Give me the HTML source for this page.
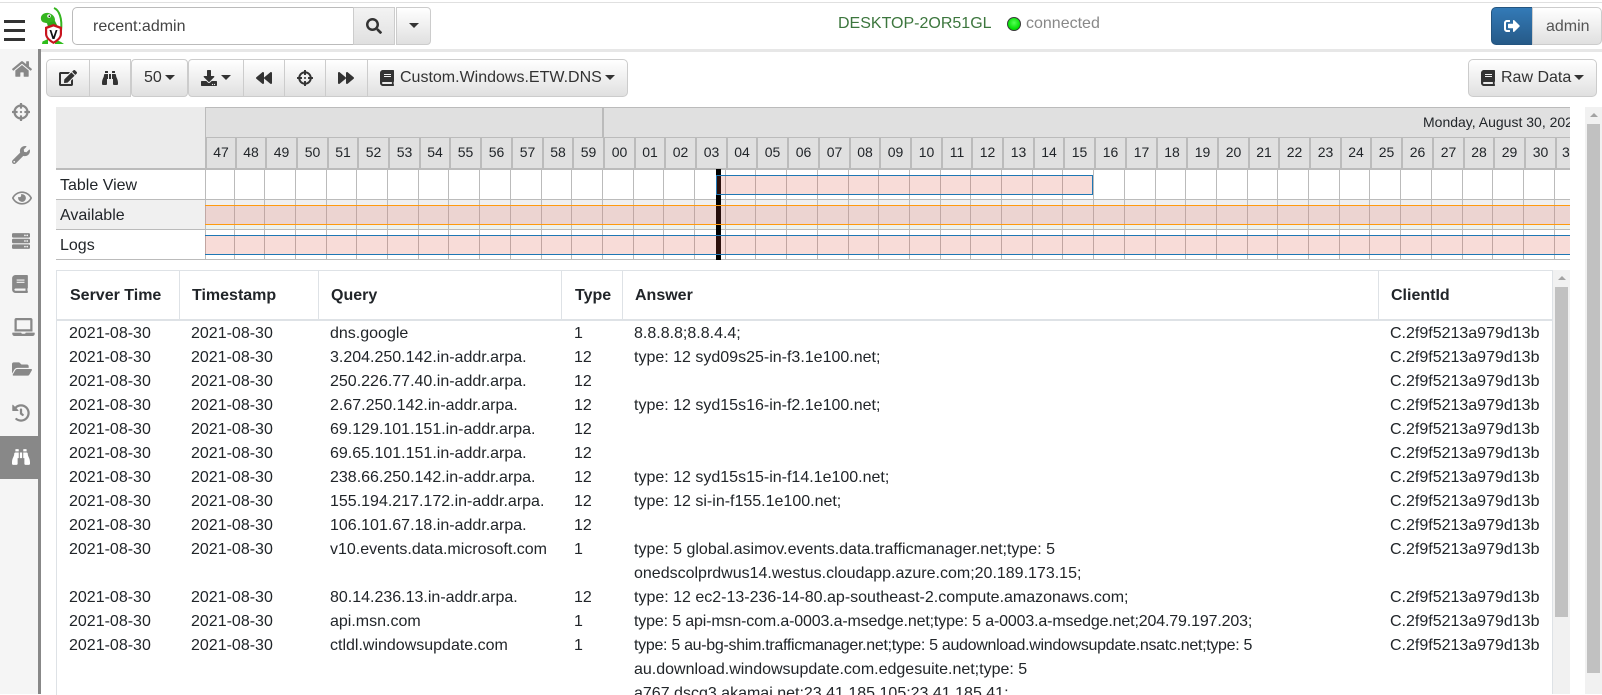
<!DOCTYPE html>
<html lang="en"><head><meta charset="utf-8"><title>Velociraptor</title>
<style>
html,body{margin:0;padding:0;width:1602px;height:694px;overflow:hidden;background:#fff;font-family:"Liberation Sans",sans-serif;font-size:16px;color:#212529}
.a{position:absolute}
.btn{position:absolute;box-sizing:border-box;background:linear-gradient(to bottom,#fff 0,#e0e0e0 100%);border:1px solid #ccc;color:#333;white-space:nowrap}
.ic{position:absolute;fill:currentColor}
.side{color:#888;fill:#888}
.caret{position:absolute;width:0;height:0;border-left:5px solid transparent;border-right:5px solid transparent;border-top:5px solid #333}
.t{position:absolute;top:138px;height:30px;line-height:29px;box-sizing:border-box;border-left:2px solid #bbb;background:#e0e0e0;font-size:14px;text-align:center;color:#212529;overflow:hidden}
.lbl{position:absolute;left:56px;width:149px;height:29px;line-height:29px;padding-left:4px;box-sizing:border-box}
.h{position:absolute;left:56px;width:1514px;height:1px;background:#bbb}
table{border-collapse:separate;border-spacing:0;table-layout:fixed;width:1495px;font-size:16px}
th{height:46px;padding:2px 0 0 12px;text-align:left;font-weight:bold;border-bottom:2px solid #dee2e6;border-right:1px solid #dee2e6;box-sizing:content-box;line-height:24px}
th:first-child{padding-left:13px}
th:nth-child(4){padding-left:13px}
th:last-child{border-right:0}
td{padding:0 0 0 11px;line-height:24px;vertical-align:top;white-space:nowrap;overflow:hidden;position:relative;top:1px}
td:first-child,td:nth-child(4){padding-left:12px}
.n1{letter-spacing:-.15px}
.n2{letter-spacing:-.3px}
</style></head><body>
<svg width="0" height="0" style="position:absolute"><defs>
<symbol id="home" viewBox="0 0 576 512"><path d="M280.37 148.26L96 300.11V464a16 16 0 0 0 16 16l112.06-.29a16 16 0 0 0 15.92-16V368a16 16 0 0 1 16-16h64a16 16 0 0 1 16 16v95.64a16 16 0 0 0 16 16.05L464 480a16 16 0 0 0 16-16V300L295.67 148.26a12.19 12.19 0 0 0-15.3 0zM571.6 251.47L488 182.56V44.05a12 12 0 0 0-12-12h-56a12 12 0 0 0-12 12v72.61L318.47 43a48 48 0 0 0-61 0L4.34 251.47a12 12 0 0 0-1.6 16.9l25.5 31A12 12 0 0 0 45.15 301l235.22-193.74a12.19 12.19 0 0 1 15.3 0L530.9 301a12 12 0 0 0 16.9-1.6l25.5-31a12 12 0 0 0-1.7-16.93z"/></symbol>
<symbol id="search" viewBox="0 0 512 512"><path d="M505 442.7L405.3 343c-4.5-4.5-10.6-7-17-7H372c27.6-35.3 44-79.7 44-128C416 93.1 322.9 0 208 0S0 93.1 0 208s93.1 208 208 208c48.3 0 92.7-16.4 128-44v16.3c0 6.4 2.5 12.5 7 17l99.7 99.7c9.4 9.4 24.6 9.4 33.9 0l28.3-28.3c9.4-9.4 9.4-24.6.1-34zM208 336c-70.7 0-128-57.2-128-128 0-70.7 57.2-128 128-128 70.7 0 128 57.2 128 128 0 70.7-57.2 128-128 128z"/></symbol>
<symbol id="bino" viewBox="0 0 512 512"><path d="M416 48c0-8.84-7.16-16-16-16h-64c-8.84 0-16 7.16-16 16v48h96V48zM63.91 159.99C61.4 253.84 3.46 274.22 0 404v44c0 17.67 14.33 32 32 32h96c17.67 0 32-14.33 32-32V288h32V128H95.84c-17.63 0-31.45 14.37-31.93 31.99zm384.18 0c-.48-17.62-14.3-31.99-31.93-31.99H320v160h32v160c0 17.67 14.33 32 32 32h96c17.67 0 32-14.33 32-32v-44c-3.46-129.78-61.4-150.16-63.91-244.01zM176 32h-64c-8.84 0-16 7.16-16 16v48h96V48c0-8.84-7.16-16-16-16zm48 256h64V128h-64v160z"/></symbol>
<symbol id="fwd" viewBox="0 0 512 512"><path d="M500.5 231.4l-192-160C287.9 54.3 256 68.6 256 96v320c0 27.4 31.9 41.8 52.5 24.6l192-160c15.3-12.8 15.3-36.4 0-49.2zm-256 0l-192-160C31.9 54.3 0 68.6 0 96v320c0 27.4 31.9 41.8 52.5 24.6l192-160c15.3-12.8 15.3-36.4 0-49.2z"/></symbol>
<symbol id="back" viewBox="0 0 512 512"><path d="M11.5 280.6l192 160c20.6 17.2 52.5 2.8 52.5-24.6V96c0-27.4-31.9-41.8-52.5-24.6l-192 160c-15.3 12.8-15.3 36.4 0 49.2zm256 0l192 160c20.6 17.2 52.5 2.8 52.5-24.6V96c0-27.4-31.9-41.8-52.5-24.6l-192 160c-15.3 12.8-15.3 36.4 0 49.2z"/></symbol>
<symbol id="cross" viewBox="0 0 512 512"><path d="M500 224h-30.364C455.724 130.325 381.675 56.276 288 42.364V12c0-6.627-5.373-12-12-12h-40c-6.627 0-12 5.373-12 12v30.364C130.325 56.276 56.276 130.325 42.364 224H12c-6.627 0-12 5.373-12 12v40c0 6.627 5.373 12 12 12h30.364C56.276 381.675 130.325 455.724 224 469.636V500c0 6.627 5.373 12 12 12h40c6.627 0 12-5.373 12-12v-30.364C381.675 455.724 455.724 381.675 469.636 288H500c6.627 0 12-5.373 12-12v-40c0-6.627-5.373-12-12-12zM288 404.634V364c0-6.627-5.373-12-12-12h-40c-6.627 0-12 5.373-12 12v40.634C165.826 392.232 119.783 346.243 107.366 288H148c6.627 0 12-5.373 12-12v-40c0-6.627-5.373-12-12-12h-40.634C119.768 165.826 165.757 119.783 224 107.366V148c0 6.627 5.373 12 12 12h40c6.627 0 12-5.373 12-12v-40.634C346.174 119.768 392.217 165.757 404.634 224H364c-6.627 0-12 5.373-12 12v40c0 6.627 5.373 12 12 12h40.634C392.232 346.174 346.243 392.217 288 404.634zM288 256c0 17.673-14.327 32-32 32s-32-14.327-32-32c0-17.673 14.327-32 32-32s32 14.327 32 32z"/></symbol>
<symbol id="eye" viewBox="0 0 576 512"><path d="M288 144a110.94 110.94 0 0 0-31.24 5 55.4 55.4 0 0 1 7.24 27 56 56 0 0 1-56 56 55.4 55.4 0 0 1-27-7.24A111.71 111.71 0 1 0 288 144zm284.52 97.4C518.29 135.59 410.93 64 288 64S57.68 135.64 3.48 241.41a32.35 32.35 0 0 0 0 29.19C57.71 376.41 165.07 448 288 448s230.32-71.64 284.52-177.41a32.35 32.35 0 0 0 0-29.19zM288 400c-98.65 0-189.09-55-237.93-144C98.91 167 189.34 112 288 112s189.09 55 237.93 144C477.1 345 386.66 400 288 400z"/></symbol>
<symbol id="laptop" viewBox="0 0 640 512"><path d="M624 416H381.54c-.74 19.81-14.71 32-32.74 32H288c-18.69 0-33.02-17.47-32.77-32H16c-8.8 0-16 7.2-16 16v16c0 35.2 28.8 64 64 64h512c35.2 0 64-28.8 64-64v-16c0-8.8-7.2-16-16-16zM576 48c0-26.4-21.6-48-48-48H112C85.6 0 64 21.6 64 48v336h512V48zm-64 272H128V64h384v256z"/></symbol>
<symbol id="folder" viewBox="0 0 576 512"><path d="M572.694 292.093L500.27 416.248A63.997 63.997 0 0 1 444.989 448H45.025c-18.523 0-30.064-20.093-20.731-36.093l72.424-124.155A64 64 0 0 1 152 256h399.964c18.523 0 30.064 20.093 20.73 36.093zM152 224h328v-48c0-26.51-21.49-48-48-48H272l-64-64H48C21.49 64 0 85.49 0 112v278.046l69.077-118.418C86.214 242.25 117.989 224 152 224z"/></symbol>
<symbol id="hist" viewBox="0 0 512 512"><path d="M504 255.531c.253 136.64-111.18 248.372-247.82 248.468-59.015.042-113.223-20.53-155.822-54.911-11.077-8.94-11.905-25.541-1.839-35.607l11.267-11.267c8.609-8.609 22.353-9.551 31.891-1.984C173.062 425.135 212.781 440 256 440c101.705 0 184-82.311 184-184 0-101.705-82.311-184-184-184-48.814 0-93.149 18.969-126.068 49.932l50.754 50.754c10.08 10.08 2.941 27.314-11.313 27.314H24c-8.837 0-16-7.163-16-16V38.627c0-14.254 17.234-21.393 27.314-11.314l49.372 49.372C129.209 34.136 189.552 8 256 8c136.81 0 247.747 110.78 248 247.531zm-180.912 78.784l9.823-12.63c8.138-10.463 6.253-25.542-4.21-33.679L288 256.349V152c0-13.255-10.745-24-24-24h-16c-13.255 0-24 10.745-24 24v135.651l65.409 50.874c10.463 8.137 25.541 6.253 33.679-4.21z"/></symbol>
<symbol id="server" viewBox="0 0 512 512"><path d="M480 160H32c-17.673 0-32-14.327-32-32V64c0-17.673 14.327-32 32-32h448c17.673 0 32 14.327 32 32v64c0 17.673-14.327 32-32 32zm-48-88c-13.255 0-24 10.745-24 24s10.745 24 24 24 24-10.745 24-24-10.745-24-24-24zm-64 0c-13.255 0-24 10.745-24 24s10.745 24 24 24 24-10.745 24-24-10.745-24-24-24zm112 248H32c-17.673 0-32-14.327-32-32v-64c0-17.673 14.327-32 32-32h448c17.673 0 32 14.327 32 32v64c0 17.673-14.327 32-32 32zm-48-88c-13.255 0-24 10.745-24 24s10.745 24 24 24 24-10.745 24-24-10.745-24-24-24zm-64 0c-13.255 0-24 10.745-24 24s10.745 24 24 24 24-10.745 24-24-10.745-24-24-24zm112 248H32c-17.673 0-32-14.327-32-32v-64c0-17.673 14.327-32 32-32h448c17.673 0 32 14.327 32 32v64c0 17.673-14.327 32-32 32zm-48-88c-13.255 0-24 10.745-24 24s10.745 24 24 24 24-10.745 24-24-10.745-24-24-24zm-64 0c-13.255 0-24 10.745-24 24s10.745 24 24 24 24-10.745 24-24-10.745-24-24-24z"/></symbol>
<symbol id="wrench" viewBox="0 0 512 512"><path d="M507.73 109.1c-2.24-9.03-13.54-12.09-20.12-5.51l-74.36 74.36-67.88-11.31-11.31-67.88 74.36-74.36c6.62-6.62 3.43-17.9-5.66-20.16-47.38-11.74-99.55.91-136.58 37.93-39.64 39.64-50.55 97.1-34.05 147.2L18.74 402.76c-24.99 24.99-24.99 65.51 0 90.5 24.99 24.99 65.51 24.99 90.5 0l213.21-213.21c50.12 16.71 107.47 5.68 147.37-34.22 37.07-37.07 49.7-89.32 37.91-136.73zM64 472c-13.25 0-24-10.75-24-24 0-13.26 10.75-24 24-24s24 10.74 24 24c0 13.25-10.75 24-24 24z"/></symbol>
<symbol id="book" viewBox="0 0 448 512"><path d="M448 360V24c0-13.3-10.7-24-24-24H96C43 0 0 43 0 96v320c0 53 43 96 96 96h328c13.3 0 24-10.7 24-24v-16c0-7.5-3.5-14.3-8.9-18.7-4.2-15.4-4.2-59.3 0-74.7 5.4-4.3 8.9-11.1 8.9-18.6zM128 134c0-3.3 2.7-6 6-6h212c3.3 0 6 2.7 6 6v20c0 3.3-2.7 6-6 6H134c-3.3 0-6-2.7-6-6v-20zm0 64c0-3.3 2.7-6 6-6h212c3.3 0 6 2.7 6 6v20c0 3.3-2.7 6-6 6H134c-3.3 0-6-2.7-6-6v-20zm253.4 250H96c-17.7 0-32-14.3-32-32 0-17.6 14.4-32 32-32h285.4c-1.9 17.1-1.9 46.9 0 64z"/></symbol>
<symbol id="edit" viewBox="0 0 576 512"><path d="M402.6 83.2l90.2 90.2c3.8 3.8 3.8 10 0 13.8L274.4 405.6l-92.8 10.3c-12.4 1.4-22.9-9.1-21.5-21.5l10.3-92.8L388.8 83.2c3.8-3.8 10-3.8 13.8 0zm162-22.9l-48.8-48.8c-15.2-15.2-39.9-15.2-55.2 0l-35.4 35.4c-3.8 3.8-3.8 10 0 13.8l90.2 90.2c3.8 3.8 10 3.8 13.8 0l35.4-35.4c15.2-15.3 15.2-40 0-55.2zM384 346.2V448H64V128h229.8c3.2 0 6.2-1.3 8.5-3.5l40-40c7.6-7.6 2.2-20.5-8.5-20.5H48C21.5 64 0 85.5 0 112v352c0 26.5 21.5 48 48 48h352c26.5 0 48-21.5 48-48V306.2c0-10.7-12.9-16-20.5-8.5l-40 40c-2.2 2.3-3.5 5.3-3.5 8.5z"/></symbol>
<symbol id="dl" viewBox="0 0 512 512"><path d="M216 0h80c13.3 0 24 10.7 24 24v168h87.7c17.8 0 26.7 21.5 14.1 34.1L269.7 378.3c-7.5 7.5-19.8 7.5-27.3 0L90.1 226.1c-12.6-12.6-3.7-34.1 14.1-34.1H192V24c0-13.3 10.7-24 24-24zm296 376v112c0 13.3-10.7 24-24 24H24c-13.3 0-24-10.7-24-24V376c0-13.3 10.7-24 24-24h146.7l49 49c20.1 20.1 52.5 20.1 72.6 0l49-49H488c13.3 0 24 10.7 24 24zm-124 88c0-11-9-20-20-20s-20 9-20 20 9 20 20 20 20-9 20-20zm64 0c0-11-9-20-20-20s-20 9-20 20 9 20 20 20 20-9 20-20z"/></symbol>
<symbol id="out" viewBox="0 0 512 512"><path d="M497 273L329 441c-15 15-41 4.5-41-17v-96H152c-13.3 0-24-10.7-24-24v-96c0-13.3 10.7-24 24-24h136V88c0-21.4 25.9-32 41-17l168 168c9.3 9.4 9.3 24.6 0 34zM192 436v-40c0-6.6-5.4-12-12-12H96c-17.7 0-32-14.3-32-32V160c0-17.7 14.3-32 32-32h84c6.6 0 12-5.4 12-12V76c0-6.6-5.4-12-12-12H96c-53 0-96 43-96 96v192c0 53 43 96 96 96h84c6.6 0 12-5.4 12-12z"/></symbol>
</defs></svg>

<!-- top bar -->
<div class="a" style="left:0;top:2px;width:1602px;height:1px;background:#e0e0e0"></div>
<div class="a" style="left:0;top:49px;width:1602px;height:3px;background:#e7e7e7"></div>
<div class="a" style="left:4px;top:20px;width:21px;height:3px;background:#333"></div>
<div class="a" style="left:4px;top:29px;width:21px;height:3px;background:#333"></div>
<div class="a" style="left:4px;top:38px;width:21px;height:3px;background:#333"></div>
<svg class="a" style="left:39px;top:7px" width="26" height="38" viewBox="0 0 26 38">
<path d="M15 1C20 3 23.500 11 22 24" fill="none" stroke="#35b51f" stroke-width="2"/>
<path d="M2 10C3 6 8 5 11 6.500C15 8 16 11 16 13C16 16 12 17 9 16.500L5 15.500C2.500 15 1.500 12.500 2 10z" fill="#35b51f"/>
<path d="M8 16L16 14L19 20H9z" fill="#2ea81b"/>
<circle cx="10" cy="9" r="1.800" fill="#fff"/><circle cx="10.300" cy="9.200" r=".8" fill="#111"/>
<path d="M3.500 34.500L9 32V37H3zM16 32L22 35 25 37H16z" fill="#2ebd1b"/>
<path d="M14.500 17L23 20V27C23 31 19 34.500 14.500 37 10 34.500 6 31 6 27V20z" fill="#c8141e"/>
<path d="M14.500 19.500L20.800 21.800V27C20.800 30 18 32.500 14.500 34.500 11 32.500 8.200 30 8.200 27V21.800z" fill="#fff"/>
<path d="M10.500 23H12.300L14.500 29.500 16.700 23H18.500L15.500 32H13.500z" fill="#111"/>
</svg>
<div class="a" style="left:72px;top:7px;width:282px;height:38px;box-sizing:border-box;border:1px solid #bbb;border-radius:5px 0 0 5px;line-height:38px;padding-left:20px;color:#444;background:#fff">recent:admin</div>
<div class="btn" style="left:353px;top:7px;width:42px;height:38px;background:linear-gradient(#f3f3f3,#e0e0e0)"><svg class="ic" style="left:12px;top:10px;color:#333" width="16" height="16"><use href="#search"/></svg></div>
<div class="btn" style="left:396px;top:7px;width:35px;height:38px;border-radius:0 4px 4px 0"><span class="caret" style="left:12px;top:15px"></span></div>
<div class="a" style="left:838px;top:14px;line-height:20px;color:#3c763d">DESKTOP-2OR51GL</div>
<div class="a" style="left:1007px;top:17px;width:14px;height:14px;border-radius:50%;border:1px solid #3a3a3a;box-sizing:border-box;background:radial-gradient(circle at 50% 40%,#5f5,#0d0 70%)"></div>
<div class="a" style="left:1026px;top:14px;line-height:20px;color:#888">connected</div>
<div class="btn" style="left:1491px;top:7px;width:42px;height:38px;border-radius:5px 0 0 5px;background:linear-gradient(#337ab7,#265a88);border-color:#245580"><svg class="ic" style="left:12px;top:10px;color:#fff" width="16" height="16"><use href="#out"/></svg></div>
<div class="btn" style="left:1532px;top:7px;width:70px;height:38px;border-radius:0 5px 5px 0;line-height:38px;padding-left:13px;color:#555">admin</div>

<!-- sidebar -->
<div class="a" style="left:0;top:49px;width:38px;height:645px;background:#f5f5f5"></div>
<div class="a" style="left:38px;top:49px;width:3px;height:645px;background:#888"></div>
<div class="a" style="left:0;top:436px;width:38px;height:43px;background:#888"></div>
<svg class="ic side" style="left:12px;top:60px" width="20" height="18"><use href="#home"/></svg>
<svg class="ic side" style="left:12px;top:103px" width="18" height="18"><use href="#cross"/></svg>
<svg class="ic side" style="left:12px;top:146px" width="18" height="18"><use href="#wrench"/></svg>
<svg class="ic side" style="left:12px;top:189px" width="20" height="18"><use href="#eye"/></svg>
<svg class="ic side" style="left:12px;top:232px" width="18" height="18"><use href="#server"/></svg>
<svg class="ic side" style="left:12px;top:275px" width="16" height="18"><use href="#book"/></svg>
<svg class="ic side" style="left:12px;top:318px" width="23" height="18"><use href="#laptop"/></svg>
<svg class="ic side" style="left:12px;top:360px" width="20" height="18"><use href="#folder"/></svg>
<svg class="ic side" style="left:12px;top:404px" width="18" height="18"><use href="#hist"/></svg>
<svg class="ic" style="left:12px;top:448px;color:#fff" width="18" height="18"><use href="#bino"/></svg>

<!-- toolbar -->
<div class="btn" style="left:46px;top:59px;width:44px;height:38px;border-radius:5px 0 0 5px"><svg class="ic" style="left:12px;top:10px" width="18" height="16"><use href="#edit"/></svg></div>
<div class="btn" style="left:89px;top:59px;width:42px;height:38px"><svg class="ic" style="left:12px;top:10px" width="16" height="16"><use href="#bino"/></svg></div>
<div class="btn" style="left:131px;top:59px;width:57px;height:38px;border-radius:4px;line-height:36px;padding-left:12px">50<span class="caret" style="left:33px;top:15px"></span></div>
<div class="btn" style="left:188px;top:59px;width:56px;height:38px;border-radius:4px 0 0 4px"><svg class="ic" style="left:12px;top:10px" width="16" height="16"><use href="#dl"/></svg><span class="caret" style="left:32px;top:15px"></span></div>
<div class="btn" style="left:243px;top:59px;width:42px;height:38px"><svg class="ic" style="left:12px;top:10px" width="16" height="16"><use href="#back"/></svg></div>
<div class="btn" style="left:284px;top:59px;width:42px;height:38px"><svg class="ic" style="left:12px;top:10px" width="16" height="16"><use href="#cross"/></svg></div>
<div class="btn" style="left:325px;top:59px;width:43px;height:38px"><svg class="ic" style="left:12px;top:10px" width="16" height="16"><use href="#fwd"/></svg></div>
<div class="btn" style="left:367px;top:59px;width:261px;height:38px;border-radius:0 5px 5px 0;line-height:36px;padding-left:32px"><svg class="ic" style="left:12px;top:10px" width="14" height="16"><use href="#book"/></svg>Custom.Windows.ETW.DNS<span class="caret" style="left:237px;top:15px"></span></div>
<div class="btn" style="left:1468px;top:59px;width:129px;height:38px;border-radius:5px;line-height:36px;padding-left:32px"><svg class="ic" style="left:12px;top:10px" width="14" height="16"><use href="#book"/></svg>Raw Data<span class="caret" style="left:105px;top:15px"></span></div>

<!-- timeline header -->
<div class="a" style="left:56px;top:107px;width:149px;height:62px;background:#ebebeb"></div>
<div class="a" style="left:205px;top:107px;width:1365px;height:31px;background:#e0e0e0;border-top:1px solid #bbb;box-sizing:border-box"></div>
<div class="a" style="left:205px;top:107px;width:1px;height:31px;background:#bbb"></div>
<div class="a" style="left:602px;top:107px;width:2px;height:31px;background:#bbb"></div>
<div class="a" style="left:1423px;top:112px;width:147px;height:20px;line-height:20px;font-size:14px;overflow:hidden;white-space:nowrap">Monday, August 30, 2021</div>
<div class="a" style="left:205px;top:137px;width:1365px;height:1px;background:#bbb"></div>
<div class="t" style="left:205px;width:30px">47</div><div class="t" style="left:235px;width:30px">48</div><div class="t" style="left:265px;width:31px">49</div><div class="t" style="left:296px;width:31px">50</div><div class="t" style="left:327px;width:30px">51</div><div class="t" style="left:357px;width:31px">52</div><div class="t" style="left:388px;width:31px">53</div><div class="t" style="left:419px;width:30px">54</div><div class="t" style="left:449px;width:31px">55</div><div class="t" style="left:480px;width:31px">56</div><div class="t" style="left:511px;width:31px">57</div><div class="t" style="left:542px;width:30px">58</div><div class="t" style="left:572px;width:31px">59</div><div class="t" style="left:603px;width:31px">00</div><div class="t" style="left:634px;width:30px">01</div><div class="t" style="left:664px;width:31px">02</div><div class="t" style="left:695px;width:31px">03</div><div class="t" style="left:726px;width:30px">04</div><div class="t" style="left:756px;width:31px">05</div><div class="t" style="left:787px;width:31px">06</div><div class="t" style="left:818px;width:31px">07</div><div class="t" style="left:849px;width:30px">08</div><div class="t" style="left:879px;width:31px">09</div><div class="t" style="left:910px;width:31px">10</div><div class="t" style="left:941px;width:30px">11</div><div class="t" style="left:971px;width:31px">12</div><div class="t" style="left:1002px;width:31px">13</div><div class="t" style="left:1033px;width:30px">14</div><div class="t" style="left:1063px;width:31px">15</div><div class="t" style="left:1094px;width:31px">16</div><div class="t" style="left:1125px;width:31px">17</div><div class="t" style="left:1156px;width:30px">18</div><div class="t" style="left:1186px;width:31px">19</div><div class="t" style="left:1217px;width:31px">20</div><div class="t" style="left:1248px;width:30px">21</div><div class="t" style="left:1278px;width:31px">22</div><div class="t" style="left:1309px;width:31px">23</div><div class="t" style="left:1340px;width:30px">24</div><div class="t" style="left:1370px;width:31px">25</div><div class="t" style="left:1401px;width:31px">26</div><div class="t" style="left:1432px;width:31px">27</div><div class="t" style="left:1463px;width:30px">28</div><div class="t" style="left:1493px;width:31px">29</div><div class="t" style="left:1524px;width:31px">30</div><div class="t" style="left:1555px;width:15px;text-align:left;padding-left:5px">31</div>
<div class="a" style="left:56px;top:168px;width:1514px;height:2px;background:#bbb"></div>

<!-- timeline rows -->
<div class="a" style="left:56px;top:200px;width:1514px;height:29px;background:#f0f0f0"></div>
<div class="a" style="left:205px;top:225px;width:1365px;height:4px;background:#eef2ee"></div>
<div class="lbl" style="top:171px">Table View</div>
<div class="lbl" style="top:201px">Available</div>
<div class="lbl" style="top:231px">Logs</div>
<div class="h" style="top:199px"></div><div class="h" style="top:229px"></div><div class="h" style="top:259px"></div>
<svg class="a" style="left:205px;top:169px" width="1365" height="91" shape-rendering="crispEdges"><path stroke="#bbb" stroke-width="1" fill="none" d="M.5 0V91M29.500 0V91M59.500 0V91M90.500 0V91M121.500 0V91M151.500 0V91M182.500 0V91M213.500 0V91M243.500 0V91M274.500 0V91M305.500 0V91M336.500 0V91M366.500 0V91M397.500 0V91M428.500 0V91M458.500 0V91M489.500 0V91M520.500 0V91M550.500 0V91M581.500 0V91M612.500 0V91M643.500 0V91M673.500 0V91M704.500 0V91M735.500 0V91M765.500 0V91M796.500 0V91M827.500 0V91M857.500 0V91M888.500 0V91M919.500 0V91M950.500 0V91M980.500 0V91M1011.500 0V91M1042.500 0V91M1072.500 0V91M1103.500 0V91M1134.500 0V91M1164.500 0V91M1195.500 0V91M1226.500 0V91M1257.500 0V91M1287.500 0V91M1318.500 0V91M1349.500 0V91"/></svg>
<div class="a" style="left:716px;top:169px;width:5px;height:91px;background:#000"></div>
<div class="a" style="left:716px;top:175px;width:377px;height:20px;box-sizing:border-box;border:1px solid #1f77b4;background:rgba(220,80,60,.2)"></div>
<div class="a" style="left:205px;top:205px;width:1365px;height:20px;box-sizing:border-box;border-top:1px solid #ff9a0e;border-bottom:1px solid #ff9a0e;background:rgba(220,80,60,.17)"></div>
<div class="a" style="left:205px;top:235px;width:1365px;height:20px;box-sizing:border-box;border-top:1px solid #1f77b4;border-bottom:1px solid #1f77b4;background:rgba(220,80,60,.2)"></div>

<!-- table -->
<div class="a" style="left:56px;top:270px;width:1496px;height:424px;border-left:1px solid #dee2e6;border-top:1px solid #dee2e6;overflow:hidden">
<table><colgroup><col style="width:123px"><col style="width:139px"><col style="width:243px"><col style="width:61px"><col style="width:756px"><col style="width:173px"></colgroup>
<thead><tr><th>Server Time</th><th>Timestamp</th><th>Query</th><th>Type</th><th>Answer</th><th>ClientId</th></tr></thead>
<tbody>
<tr><td>2021-08-30</td><td>2021-08-30</td><td>dns.google</td><td>1</td><td>8.8.8.8;8.8.4.4;</td><td>C.2f9f5213a979d13b</td></tr>
<tr><td>2021-08-30</td><td>2021-08-30</td><td>3.204.250.142.in-addr.arpa.</td><td>12</td><td>type: 12 syd09s25-in-f3.1e100.net;</td><td>C.2f9f5213a979d13b</td></tr>
<tr><td>2021-08-30</td><td>2021-08-30</td><td>250.226.77.40.in-addr.arpa.</td><td>12</td><td></td><td>C.2f9f5213a979d13b</td></tr>
<tr><td>2021-08-30</td><td>2021-08-30</td><td>2.67.250.142.in-addr.arpa.</td><td>12</td><td>type: 12 syd15s16-in-f2.1e100.net;</td><td>C.2f9f5213a979d13b</td></tr>
<tr><td>2021-08-30</td><td>2021-08-30</td><td>69.129.101.151.in-addr.arpa.</td><td>12</td><td></td><td>C.2f9f5213a979d13b</td></tr>
<tr><td>2021-08-30</td><td>2021-08-30</td><td>69.65.101.151.in-addr.arpa.</td><td>12</td><td></td><td>C.2f9f5213a979d13b</td></tr>
<tr><td>2021-08-30</td><td>2021-08-30</td><td>238.66.250.142.in-addr.arpa.</td><td>12</td><td>type: 12 syd15s15-in-f14.1e100.net;</td><td>C.2f9f5213a979d13b</td></tr>
<tr><td>2021-08-30</td><td>2021-08-30</td><td>155.194.217.172.in-addr.arpa.</td><td>12</td><td>type: 12 si-in-f155.1e100.net;</td><td>C.2f9f5213a979d13b</td></tr>
<tr><td>2021-08-30</td><td>2021-08-30</td><td>106.101.67.18.in-addr.arpa.</td><td>12</td><td></td><td>C.2f9f5213a979d13b</td></tr>
<tr><td>2021-08-30</td><td>2021-08-30</td><td>v10.events.data.microsoft.com</td><td>1</td><td>type: 5 global.asimov.events.data.trafficmanager.net;type: 5<br>onedscolprdwus14.westus.cloudapp.azure.com;20.189.173.15;</td><td>C.2f9f5213a979d13b</td></tr>
<tr><td>2021-08-30</td><td>2021-08-30</td><td>80.14.236.13.in-addr.arpa.</td><td>12</td><td>type: 12 ec2-13-236-14-80.ap-southeast-2.compute.amazonaws.com;</td><td>C.2f9f5213a979d13b</td></tr>
<tr><td>2021-08-30</td><td>2021-08-30</td><td>api.msn.com</td><td>1</td><td><span class="n1">type: 5 api-msn-com.a-0003.a-msedge.net;type: 5 a-0003.a-msedge.net;204.79.197.203;</span></td><td>C.2f9f5213a979d13b</td></tr>
<tr><td>2021-08-30</td><td>2021-08-30</td><td>ctldl.windowsupdate.com</td><td>1</td><td><span class="n2">type: 5 au-bg-shim.trafficmanager.net;type: 5 audownload.windowsupdate.nsatc.net;type: 5</span><br>au.download.windowsupdate.com.edgesuite.net;type: 5<br>a767.dscg3.akamai.net;23.41.185.105;23.41.185.41;</td><td>C.2f9f5213a979d13b</td></tr>
</tbody></table>
</div>
<div class="a" style="left:1552px;top:270px;width:1px;height:424px;background:#dee2e6"></div>

<!-- scrollbars -->
<div class="a" style="left:1553px;top:270px;width:17px;height:424px;background:#f1f1f1"></div>
<div class="a" style="left:1555px;top:287px;width:13px;height:330px;background:#c1c1c1"></div>
<div class="a" style="left:1558px;top:276px;width:0;height:0;border-left:4px solid transparent;border-right:4px solid transparent;border-bottom:4px solid #a3a3a3"></div>
<div class="a" style="left:1585px;top:107px;width:17px;height:587px;background:#f1f1f1"></div>
<div class="a" style="left:1587px;top:124px;width:13px;height:549px;background:#c1c1c1"></div>
<div class="a" style="left:1590px;top:113px;width:0;height:0;border-left:4px solid transparent;border-right:4px solid transparent;border-bottom:4px solid #a3a3a3"></div>
</body></html>
